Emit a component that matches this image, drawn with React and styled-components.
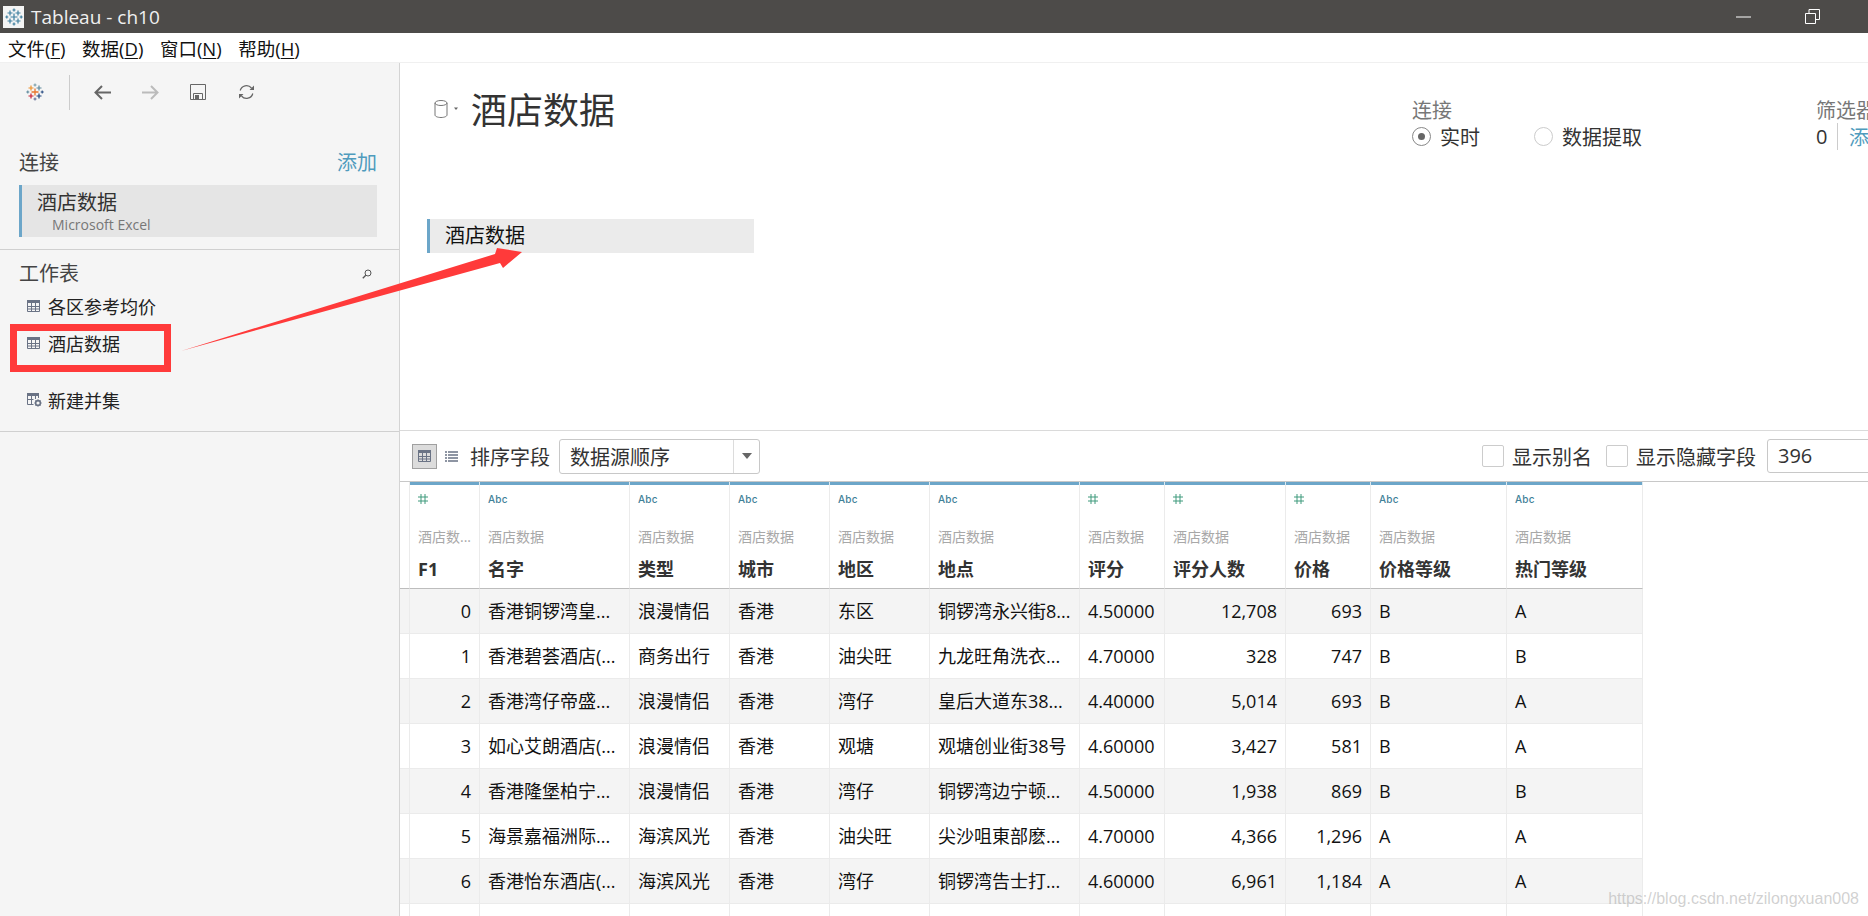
import React from "react";
import styled, { createGlobalStyle } from "styled-components";

const FONT = `"Open Sans", "Noto Sans CJK SC", sans-serif`;

const Global = createGlobalStyle`
  html, body { margin: 0; padding: 0; background: #fff; }
  * { box-sizing: border-box; }
`;

const Page = styled.div`
  position: relative; width: 1868px; height: 916px; overflow: hidden;
  font-family: ${FONT}; color: #333; background: #fff;
  display: flex; flex-direction: column;
`;
const TitleBar = styled.div`
  height: 33px; background: #4d4b49; color: #f0f0f0; display: flex; align-items: center;
  padding-left: 3px; font-size: 19px; flex: none;
`;
const TitleIcon = styled.div`
  width: 21px; height: 22px; background: #f4f4f4; display: flex; align-items: center; justify-content: center; margin-right: 7px;
`;
const WindowButtons = styled.div`
  margin-left: auto; display: flex; align-items: center; gap: 54px; padding-right: 48px;
`;
const MenuBar = styled.div`
  height: 29px; flex: none; display: flex; align-items: center; padding-left: 8px; gap: 16.5px;
  font-size: 18.5px; color: #111; background: #fff;
`;
const MenuItem = styled.span` u { text-underline-offset: 2px; } `;
const Body = styled.div` flex: 1; display: flex; min-height: 0; border-top: 1px solid #f0f0f0; `;
const Sidebar = styled.aside`
  width: 400px; flex: none; background: #f5f5f5; border-right: 1px solid #d4d4d4; display: flex; flex-direction: column;
`;
const Toolbar = styled.div`
  height: 62px; flex: none; display: flex; align-items: center; padding-bottom: 4px;
`;
const ToolSlot = styled.div`
  width: ${p => p.$w}px; flex: none; display: flex; justify-content: center; align-items: center;
`;
const ToolDivider = styled.div` width: 1px; height: 35px; background: #ccc; flex: none; margin: 0 8px 0 0; `;
const ConnSection = styled.section`
  padding: 24px 22px 0 19px; height: 125px; flex: none; border-bottom: 1px solid #d0d0d0;
`;
const SectionHead = styled.div`
  display: flex; justify-content: space-between; align-items: center; font-size: 20px; line-height: 28px; color: #444; height: 28px;
`;
const AddLink = styled.span` color: #4f9bbd; `;
const ConnCard = styled.div`
  margin-top: 8px; height: 52px; background: #e5e5e5; border-left: 3px solid #6ca6c9; padding: 4px 0 0 15px;
`;
const ConnName = styled.div` font-size: 20px; line-height: 27px; color: #333; `;
const ConnType = styled.div` font-size: 14px; line-height: 19px; color: #777; padding-left: 15px; margin-top: -1px; `;
const SheetSection = styled.section`
  height: 182px; flex: none; padding: 10px 22px 0 19px; border-bottom: 1px solid #d0d0d0;
`;
const SheetHead = styled(SectionHead)` padding-right: 5px; margin-bottom: -1px; `;
const SheetRow = styled.div`
  display: flex; align-items: center; gap: 8px; font-size: 18px; color: #222; height: 37px; margin-left: 8px;
  margin-top: ${p => p.$top || 0}px;
`;
const Main = styled.main` flex: 1; min-width: 0; display: flex; flex-direction: column; `;
const TopPane = styled.div` height: 367px; flex: none; padding: 30px 0 0 27px; display: flex; flex-direction: column; `;
const TopHeader = styled.div` display: flex; align-items: flex-start; height: 126px; flex: none; `;
const DsIcon = styled.div` display: flex; align-items: flex-start; width: 44px; padding: 7px 0 0 7px; height: 36px; flex: none; `;
const BigTitle = styled.h1` margin: -6px 0 0; font-size: 36px; line-height: 48px; font-weight: 400; color: #333; `;
const ConnGroup = styled.div` margin-left: auto; width: 404px; flex: none; padding-top: 5px; `;
const SmallLabel = styled.div` font-size: 20px; line-height: 26px; color: #777; white-space: nowrap; height: 24px; `;
const RadioRow = styled.div` display: flex; align-items: center; height: 28px; font-size: 20px; color: #333; `;
const RadioItem = styled.label` display: flex; align-items: center; gap: 9px; width: 122px; `;
const RadioDot = styled.span`
  width: 19px; height: 19px; border-radius: 50%; border: 1px solid ${p => p.$on ? "#888" : "#ccc"}; display: flex; align-items: center; justify-content: center;
  &::after { content: ""; width: 7px; height: 7px; border-radius: 50%; background: ${p => p.$on ? "#666" : "transparent"}; }
`;
const FilterGroup = styled.div` width: 52px; flex: none; padding-top: 5px; `;
const FilterRow = styled.div` display: flex; align-items: center; height: 28px; font-size: 20px; color: #333; white-space: nowrap; `;
const FilterCount = styled.span` width: 21px; flex: none; `;
const FilterDivider = styled.span` width: 1px; height: 27px; background: #ccc; margin-right: 11px; flex: none; `;
const TableTag = styled.div`
  width: 327px; height: 34px; background: #ebebeb; border-left: 3px solid #6ca6c9; padding-left: 15px;
  font-size: 20px; line-height: 34px; color: #111; flex: none;
`;
const FieldBar = styled.div`
  height: 52px; flex: none; border-top: 1px solid #dadada; border-bottom: 1px solid #c8c8c8;
  display: flex; align-items: center; padding-left: 12px; font-size: 20px; color: #333;
`;
const ViewButton = styled.div`
  width: 25px; height: 25px; background: #dcdcdc; border: 1px solid #a0a0a0; display: flex; align-items: center; justify-content: center; margin-right: 8px;
`;
const ListBtn = styled.div` width: 13px; display: flex; margin-right: 12px; `;
const SelectBox = styled.div`
  margin-left: 9px; width: 201px; height: 35px; border: 1px solid #c8c8c8; border-radius: 3px; display: flex; align-items: center; padding-left: 10px;
`;
const SelectText = styled.span` flex: 1; `;
const SelectArrow = styled.span`
  width: 26px; height: 100%; border-left: 1px solid #dcdcdc; display: flex; align-items: center; justify-content: center;
  &::after { content: ""; border: 5px solid transparent; border-top: 6px solid #666; border-bottom: 0; }
`;
const FieldRight = styled.div` margin-left: auto; display: flex; align-items: center; margin-right: -80px; `;
const CheckItem = styled.label` display: flex; align-items: center; gap: 8px; margin-right: ${p => p.$mr}px; `;
const CheckBox = styled.span` width: 22px; height: 22px; border: 1px solid #ccc; border-radius: 2px; background: #fff; `;
const NumInput = styled.div`
  width: 181px; height: 34px; border: 1px solid #c8c8c8; border-radius: 3px; padding-left: 10px; line-height: 32px; color: #333;
`;
const Grid = styled.div`
  display: grid; width: 1243px;
  grid-template-columns: 10px 70px 150px 100px 100px 100px 150px 85px 121px 85px 136px 136px;
  grid-auto-rows: 45px; grid-template-rows: 107px;
`;
const StubHead = styled.div` border-right: 1px solid #ebebeb; border-bottom: 1px solid #bdbdbd; `;
const HeadCell = styled.div`
  border-right: 1px solid #ebebeb; border-bottom: 1px solid #bdbdbd; border-top: 3px solid #6ca6c9; padding: 0 8px; position: relative;
  display: flex; flex-direction: column; min-width: 0;
  &::after { content: ""; position: absolute; right: -1px; top: -3px; height: 3px; width: 1px; background: #dceaf1; }
`;
const TypeIcon = styled.div` height: 27px; display: flex; align-items: center; flex: none; margin-bottom: 3px; `;
const AbcTag = styled.span` font-size: 10px; font-weight: 500; color: #3f8198; font-family: "Inter", sans-serif; letter-spacing: .2px; `;
const SourceName = styled.div`
  margin-top: 11px; font-size: 14px; line-height: 22px; color: #a8a8a8; white-space: nowrap; overflow: hidden;
`;
const FieldName = styled.div` margin-top: 9px; font-size: 18px; line-height: 24px; font-weight: 700; color: #333; `;
const StubCell = styled.div`
  border-right: 1px solid #ebebeb; border-bottom: 1px solid #ebebeb; background: ${p => p.$odd ? "#fff" : "#f4f4f4"};
`;
const Cell = styled.div`
  border-right: 1px solid #ebebeb; border-bottom: 1px solid #ebebeb; background: ${p => p.$odd ? "#fff" : "#f4f4f4"};
  padding: 0 8px; font-size: 18px; line-height: 44px; color: #111; white-space: nowrap; overflow: hidden;
  text-align: ${p => p.$num ? "right" : "left"};
`;
const Watermark = styled.div`
  position: absolute; right: 9px; bottom: 8px; font-size: 16px; color: rgba(170,170,170,.55); font-family: "Liberation Sans", sans-serif;
`;
const Annotation = styled.svg` position: absolute; left: 0; top: 0; pointer-events: none; `;
const RedBox = styled.div`
  position: absolute; left: 10px; top: 324px; width: 161px; height: 48px; border: 7px solid #ff3a3a;
`;
const UnionSvg = styled.svg` margin-right: -2px; flex: none; `;

const Plus = ({ x, y, s, c, w = 1 }) => (
  <path d={`M${x - s} ${y}H${x + s}M${x} ${y - s}V${y + s}`} stroke={c} strokeWidth={w} fill="none" />
);

const TableauLogo = () => (
  <svg width="18" height="18" viewBox="0 0 18 18">
    <Plus x={9} y={9} s={3.5} c="#e8762d" w={1.3} />
    <Plus x={5} y={5} s={2.5} c="#eb912c" w={1.2} />
    <Plus x={13} y={5} s={2.5} c="#5b879b" w={1.2} />
    <Plus x={5} y={13} s={2.5} c="#c72037" w={1.2} />
    <Plus x={13} y={13} s={2.5} c="#1f457e" w={1.2} />
    <Plus x={9} y={2} s={1.5} c="#7099a6" />
    <Plus x={9} y={16} s={1.5} c="#5c6692" />
    <Plus x={1.8} y={9} s={1.5} c="#59879b" />
    <Plus x={16.2} y={9} s={1.5} c="#1f457e" />
  </svg>
);

const SnowLogo = () => (
  <svg width="18" height="18" viewBox="0 0 18 18">
    {[[9,9,3.5],[5,5,2.5],[13,5,2.5],[5,13,2.5],[13,13,2.5],[9,2,1.5],[9,16,1.5],[1.8,9,1.5],[16.2,9,1.5]].map(([x,y,s]) => (
      <Plus key={`${x}-${y}`} x={x} y={y} s={s} c="#3f7f9f" w={1.2} />
    ))}
  </svg>
);

const SheetIcon = ({ c = "#6a7385" }) => (
  <svg width="13" height="12" viewBox="0 0 13 12">
    <rect width="13" height="3" fill={c} />
    <path d="M.5 3v8.5h12V3M4.5 3v8.5M8.5 3v8.5M.5 6.5h12M.5 9h12" stroke={c} fill="none" />
  </svg>
);

const UnionIcon = () => (
  <UnionSvg width="15" height="14" viewBox="0 0 15 14">
    <rect width="12" height="3" fill="#6a7385" />
    <path d="M.5 3v8.5h6M4.5 3v8.5M8.5 3v3M.5 6.5h6M11.5 3v2" stroke="#6a7385" fill="none" />
    <circle cx="11" cy="10" r="2.4" fill="none" stroke="#6a7385" strokeWidth="1.6" />
    <path d="M11 6.4v1.2M11 12.4v1.2M7.4 10h1.2M13.4 10h1.2M8.5 7.5l.8.8M12.7 11.7l.8.8M8.5 12.5l.8-.8M12.7 8.3l.8-.8" stroke="#6a7385" />
  </UnionSvg>
);

const ArrowIcon = ({ c, flip }) => (
  <svg width="17" height="15" viewBox="0 0 17 15" style={flip ? { transform: "scaleX(-1)" } : undefined}>
    <path d="M8 1L1.5 7.5 8 14M2 7.5h15" stroke={c} strokeWidth="2" fill="none" />
  </svg>
);

const SaveIcon = () => (
  <svg width="16" height="16" viewBox="0 0 16 16">
    <path d="M.5.5h15v15H.5zM3.5 15.5V9.5h9v6" stroke="#666" fill="none" />
    <rect x="5" y="11" width="4" height="4" fill="#666" />
  </svg>
);

const RefreshIcon = () => (
  <svg width="17" height="16" viewBox="0 0 17 16">
    <path d="M2.2 6.5A6.5 6.5 0 0 1 13.5 4M14.8 9.5A6.5 6.5 0 0 1 3.5 12" stroke="#666" strokeWidth="1.2" fill="none" />
    <path d="M16 1.5V6h-4.5zM1 14.5V10h4.5z" fill="#666" />
  </svg>
);

const SearchIcon = () => (
  <svg width="10" height="10" viewBox="0 0 10 10">
    <circle cx="6" cy="4" r="3" fill="none" stroke="#555" />
    <path d="M3.8 6.2L.8 9.2" stroke="#555" strokeWidth="1.3" />
  </svg>
);

const CylinderIcon = () => (
  <svg width="24" height="18" viewBox="0 0 24 18">
    <ellipse cx="7" cy="3" rx="6" ry="2.5" fill="none" stroke="#777" />
    <path d="M1 3v12c0 1.4 2.7 2.5 6 2.5s6-1.1 6-2.5V3" fill="none" stroke="#777" />
    <path d="M20 7.5h4l-2 2.5z" fill="#666" />
  </svg>
);

const HashIcon = () => (
  <svg width="10" height="10" viewBox="0 0 10 10">
    <path d="M0 3h10M0 7h10M3 0v10M7 0v10" stroke="#3f9a7c" fill="none" />
  </svg>
);

const ListIcon = () => (
  <svg width="13" height="11" viewBox="0 0 13 11">
    <path d="M0 1h2M3 1h10M0 4h2M3 4h10M0 7h2M3 7h10M0 10h2M3 10h10" stroke="#6a7385" strokeWidth="1.5" />
  </svg>
);

const columns = [
  ["num", "F1", "酒店数..."], ["abc", "名字"], ["abc", "类型"], ["abc", "城市"], ["abc", "地区"], ["abc", "地点"],
  ["num", "评分"], ["num", "评分人数"], ["num", "价格"], ["abc", "价格等级"], ["abc", "热门等级"],
];
const rows = [
  ["0", "香港铜锣湾皇...", "浪漫情侣", "香港", "东区", "铜锣湾永兴街8...", "4.50000", "12,708", "693", "B", "A"],
  ["1", "香港碧荟酒店(...", "商务出行", "香港", "油尖旺", "九龙旺角洗衣...", "4.70000", "328", "747", "B", "B"],
  ["2", "香港湾仔帝盛...", "浪漫情侣", "香港", "湾仔", "皇后大道东38...", "4.40000", "5,014", "693", "B", "A"],
  ["3", "如心艾朗酒店(...", "浪漫情侣", "香港", "观塘", "观塘创业街38号", "4.60000", "3,427", "581", "B", "A"],
  ["4", "香港隆堡柏宁...", "浪漫情侣", "香港", "湾仔", "铜锣湾边宁顿...", "4.50000", "1,938", "869", "B", "B"],
  ["5", "海景嘉福洲际...", "海滨风光", "香港", "油尖旺", "尖沙咀東部麽...", "4.70000", "4,366", "1,296", "A", "A"],
  ["6", "香港怡东酒店(...", "海滨风光", "香港", "湾仔", "铜锣湾告士打...", "4.60000", "6,961", "1,184", "A", "A"],
  ["", "", "", "", "", "", "", "", "", "", ""],
];
const numericCols = new Set([0, 7, 8]);

export default function App() {
  return (
    <Page>
      <Global />
      <TitleBar>
        <TitleIcon><SnowLogo /></TitleIcon>
        Tableau - ch10
        <WindowButtons>
          <svg width="15" height="2" viewBox="0 0 15 2"><path d="M0 1h15" stroke="#fff" /></svg>
          <svg width="15" height="15" viewBox="0 0 15 15">
            <path d="M.5 4.5h10v10H.5zM4 4.5V.5h10.5v10h-4" stroke="#fff" fill="none" />
          </svg>
        </WindowButtons>
      </TitleBar>
      <MenuBar>
        <MenuItem>文件(<u>F</u>)</MenuItem>
        <MenuItem>数据(<u>D</u>)</MenuItem>
        <MenuItem>窗口(<u>N</u>)</MenuItem>
        <MenuItem>帮助(<u>H</u>)</MenuItem>
      </MenuBar>
      <Body>
        <Sidebar>
          <Toolbar>
            <ToolSlot $w={69}><TableauLogo /></ToolSlot>
            <ToolDivider />
            <ToolSlot $w={48}><ArrowIcon c="#666" /></ToolSlot>
            <ToolSlot $w={48}><ArrowIcon c="#bbb" flip /></ToolSlot>
            <ToolSlot $w={48}><SaveIcon /></ToolSlot>
            <ToolSlot $w={48}><RefreshIcon /></ToolSlot>
          </Toolbar>
          <ConnSection>
            <SectionHead>连接<AddLink>添加</AddLink></SectionHead>
            <ConnCard>
              <ConnName>酒店数据</ConnName>
              <ConnType>Microsoft Excel</ConnType>
            </ConnCard>
          </ConnSection>
          <SheetSection>
            <SheetHead>工作表<SearchIcon /></SheetHead>
            <SheetRow><SheetIcon />各区参考均价</SheetRow>
            <SheetRow><SheetIcon />酒店数据</SheetRow>
            <SheetRow $top={20}><UnionIcon />新建并集</SheetRow>
          </SheetSection>
        </Sidebar>
        <Main>
          <TopPane>
            <TopHeader>
              <DsIcon><CylinderIcon /></DsIcon>
              <BigTitle>酒店数据</BigTitle>
              <ConnGroup>
                <SmallLabel>连接</SmallLabel>
                <RadioRow>
                  <RadioItem><RadioDot $on />实时</RadioItem>
                  <RadioItem><RadioDot />数据提取</RadioItem>
                </RadioRow>
              </ConnGroup>
              <FilterGroup>
                <SmallLabel>筛选器</SmallLabel>
                <FilterRow><FilterCount>0</FilterCount><FilterDivider /><AddLink>添加</AddLink></FilterRow>
              </FilterGroup>
            </TopHeader>
            <TableTag>酒店数据</TableTag>
          </TopPane>
          <FieldBar>
            <ViewButton><SheetIcon /></ViewButton>
            <ListBtn><ListIcon /></ListBtn>
            排序字段
            <SelectBox><SelectText>数据源顺序</SelectText><SelectArrow /></SelectBox>
            <FieldRight>
              <CheckItem $mr={14}><CheckBox />显示别名</CheckItem>
              <CheckItem $mr={11}><CheckBox />显示隐藏字段</CheckItem>
              <NumInput>396</NumInput>
            </FieldRight>
          </FieldBar>
          <Grid>
            <StubHead />
            {columns.map(([type, name, src]) => (
              <HeadCell key={name}>
                <TypeIcon>{type === "num" ? <HashIcon /> : <AbcTag>Abc</AbcTag>}</TypeIcon>
                <SourceName>{src || "酒店数据"}</SourceName>
                <FieldName>{name}</FieldName>
              </HeadCell>
            ))}
            {rows.map((row, r) => (
              <React.Fragment key={r}>
                <StubCell $odd={r % 2 === 1} />
                {row.map((value, c) => (
                  <Cell key={c} $odd={r % 2 === 1} $num={numericCols.has(c)}>{value}</Cell>
                ))}
              </React.Fragment>
            ))}
          </Grid>
        </Main>
      </Body>
      <RedBox />
      <Annotation width="1868" height="916" viewBox="0 0 1868 916">
        <polygon points="181,351 495,254 497,248 522,252 503,268 500,263" fill="#ff3a3a" />
      </Annotation>
      <Watermark>https://blog.csdn.net/zilongxuan008</Watermark>
    </Page>
  );
}
